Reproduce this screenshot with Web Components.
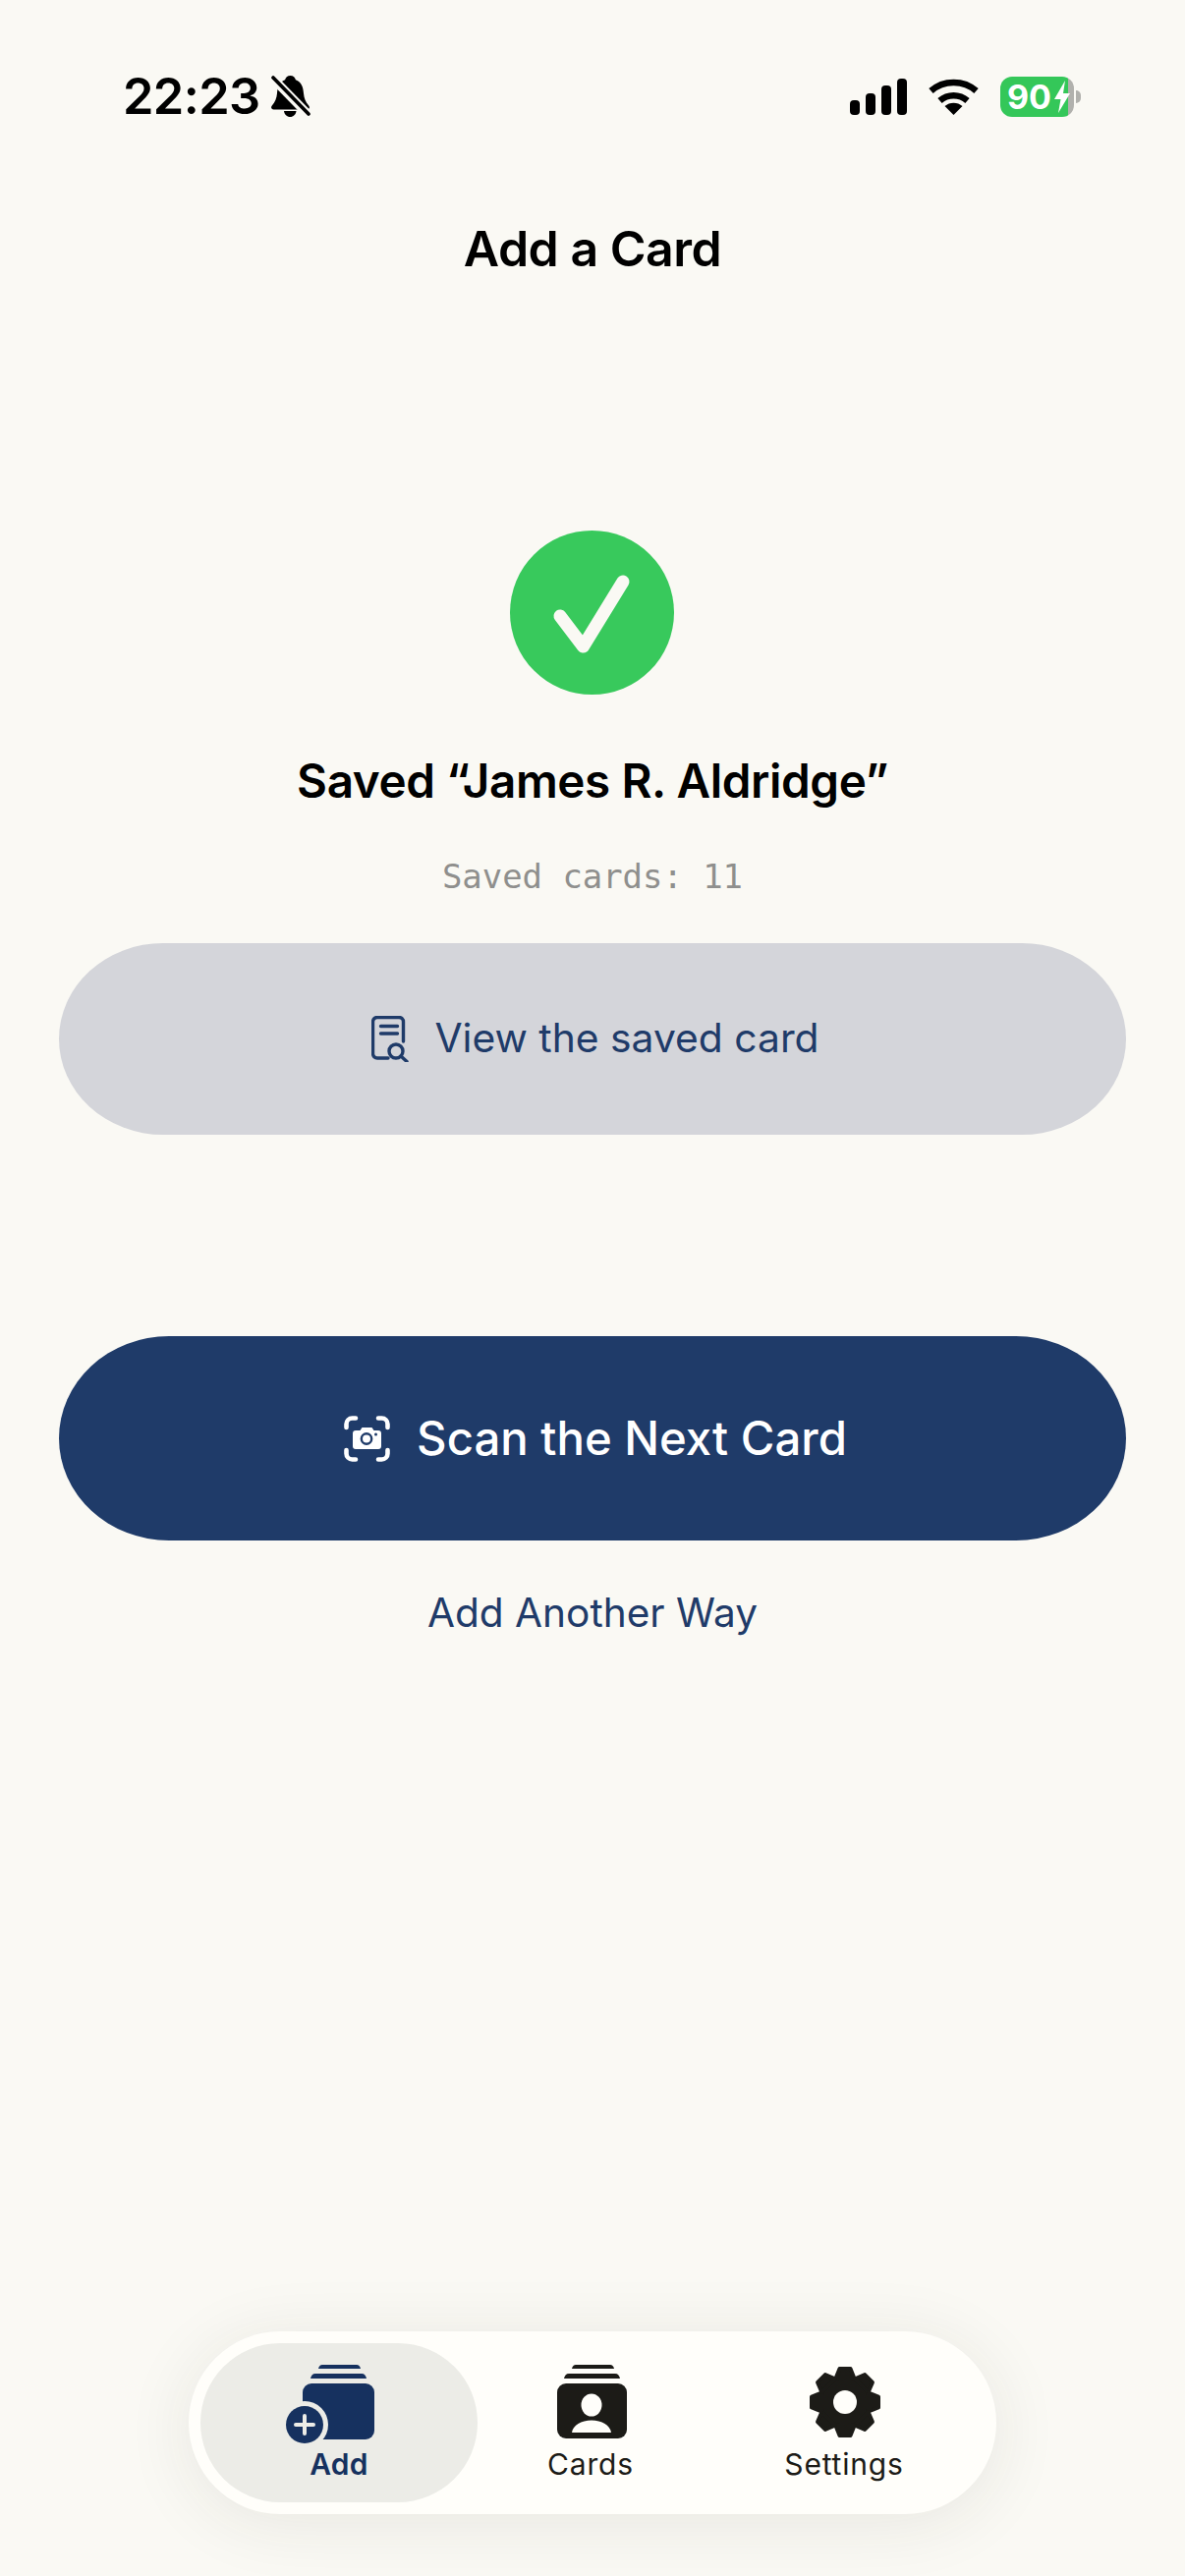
<!DOCTYPE html>
<html lang="en">
<head>
<meta charset="utf-8">
<title>Add a Card</title>
<style>
    html, body { margin: 0; padding: 0; background: #faf9f4; }
    body { font-family: Inter, "Liberation Sans", sans-serif; }
</style>
</head>
<body>
<app-screen>
    <status-bar></status-bar>
    <screen-title>Add a Card</screen-title>
    <save-result name="Saved “James R. Aldridge”" count="Saved cards: 11"></save-result>
    <action-button kind="secondary" icon="doc">View the saved card</action-button>
    <action-button kind="primary" icon="scan">Scan the Next Card</action-button>
    <text-link>Add Another Way</text-link>
    <tab-bar>
        <tab-item icon="add" active style="--tab-width: 282px">Add</tab-item>
        <tab-item icon="cards" style="--tab-width: 230px">Cards</tab-item>
        <tab-item icon="gear" style="--tab-width: 286px">Settings</tab-item>
    </tab-bar>
</app-screen>

<script>
class AppScreen extends HTMLElement {
    constructor() {
        super();
        this.attachShadow({ mode: 'open' });
        this.shadowRoot.innerHTML = `
            <style>
                :host {
                    display: flex;
                    flex-direction: column;
                    box-sizing: border-box;
                    width: 1206px;
                    height: 2622px;
                    overflow: hidden;
                    background: #faf9f4;
                }
            </style>
            <slot></slot>
        `;
    }
}

class StatusBar extends HTMLElement {
    constructor() {
        super();
        this.attachShadow({ mode: 'open' });
        this.shadowRoot.innerHTML = `
            <style>
                :host {
                    display: flex;
                    align-items: center;
                    justify-content: space-between;
                    box-sizing: border-box;
                    height: 60px;
                    margin-top: 68px;
                    padding: 0 106px 0 125px;
                    color: #000;
                }
                .left, .right { display: flex; align-items: center; }
                .time {
                    font: 600 50.500px/60px Inter, sans-serif;
                    letter-spacing: -0.6px;
                }
                .bell { margin-left: 11px; }
                .wifi { margin-left: 22px; }
                .battery {
                    position: relative;
                    display: flex;
                    align-items: center;
                    box-sizing: border-box;
                    width: 75px;
                    height: 41px;
                    margin-left: 22px;
                    margin-right: 7px;
                    padding-left: 7px;
                    border-radius: 12px;
                    background: linear-gradient(90deg, #34c759 69px, #b1b1ad 69px);
                    color: #fff;
                    font: 700 34px/41px Inter, sans-serif;
                    letter-spacing: 0;
                }
                .battery svg { margin-left: 3px; }
                .battery::after {
                    content: '';
                    position: absolute;
                    right: -7px;
                    top: 14px;
                    width: 5px;
                    height: 13px;
                    border-radius: 0 6px 6px 0;
                    background: #b1b1ad;
                }
            </style>
            <div class="left">
                <span class="time">22:23</span>
                <svg class="bell" width="40" height="44" viewBox="0 0 40 44">
                    <path fill="#000" d="M19.500 1c3 0 5 2 5.400 4.300C31 7.500 32.500 13 33 19c.4 5 2 9 5.200 12.500 1.500 1.800.6 3.900-1.800 3.900H2.600C.2 35.400-.7 33.300.8 31.500 4 28 5.600 24 6 19c.5-6 2-11.500 8.100-13.700C14.500 3 16.500 1 19.500 1z"/>
                    <path fill="#000" d="M13 37h12.500c-.4 3.500-3 6-6.250 6S13.400 40.500 13 37z"/>
                    <path stroke="#faf9f4" stroke-width="9" d="M-2 0L40 43"/>
                    <path stroke="#000" stroke-width="3.600" stroke-linecap="round" d="M2 3L38 40"/>
                </svg>
            </div>
            <div class="right">
                <svg width="58" height="37" viewBox="0 0 58 37">
                    <rect x="0" y="22" width="10" height="15" rx="4"/>
                    <rect x="16" y="15" width="10" height="22" rx="4"/>
                    <rect x="32" y="7" width="10" height="30" rx="4"/>
                    <rect x="48" y="0" width="10" height="37" rx="4"/>
                </svg>
                <svg class="wifi" width="51" height="37" viewBox="0 0 51 37">
                    <path fill="none" stroke="#000" stroke-width="6.500" stroke-linecap="butt" d="M2.500 12.500C15 1 36 1 48.500 12.500"/>
                    <path fill="none" stroke="#000" stroke-width="6.500" stroke-linecap="butt" d="M11.500 22.500C19.500 15.500 31.500 15.500 39.500 22.500"/>
                    <path fill="#000" d="M25.500 37L16.500 28C21.500 23.500 29.500 23.500 34.500 28z"/>
                </svg>
                <div class="battery">
                    <span>90</span>
                    <svg width="16" height="33" viewBox="0 0 16 33">
                        <path fill="#fff" d="M11 0L0 19h6.500L4 33 16 13H9z"/>
                    </svg>
                </div>
            </div>
        `;
    }
}

class ScreenTitle extends HTMLElement {
    constructor() {
        super();
        this.attachShadow({ mode: 'open' });
        this.shadowRoot.innerHTML = `
            <style>
                :host {
                    display: block;
                    margin-top: 95px;
                    color: #000;
                    font: 600 50px/60px Inter, sans-serif;
                    letter-spacing: -0.5px;
                    text-align: center;
                }
            </style>
            <slot></slot>
        `;
    }
}

class SaveResult extends HTMLElement {
    constructor() {
        super();
        this.attachShadow({ mode: 'open' });
    }

    connectedCallback() {
        this.shadowRoot.innerHTML = `
            <style>
                :host {
                    display: flex;
                    flex-direction: column;
                    align-items: center;
                    margin-top: 257px;
                }
                svg { margin-left: -2px; }
                .nombre {
                    margin-top: 58px;
                    color: #000;
                    font: 600 47.600px/60px Inter, sans-serif;
                    letter-spacing: -0.4px;
                }
                .total {
                    margin-top: 48px;
                    color: #8f8f8d;
                    font: 400 33.900px/40px "DejaVu Sans Mono", monospace;
                }
            </style>
            <svg width="167" height="167" viewBox="0 0 167 167">
                <circle cx="83.500" cy="83.500" r="83.500" fill="#38c95c"/>
                <path fill="none" stroke="#faf9f4" stroke-width="13" stroke-linecap="round" stroke-linejoin="round" d="M51 87L74.500 118L115 52"/>
            </svg>
            <div class="nombre">${this.getAttribute('name')}</div>
            <div class="total">${this.getAttribute('count')}</div>
        `;
    }
}

const ICONOS_BOTON = {
    doc: `
        <svg width="38" height="47" viewBox="0 0 38 47" fill="none" stroke="currentColor" stroke-width="3.400" stroke-linecap="round" stroke-linejoin="round">
            <path d="M17 43H6a4.500 4.500 0 0 1-4.500-4.500V6A4.500 4.500 0 0 1 6 1.500h22A4.500 4.500 0 0 1 32.500 6v20"/>
            <path d="M9.500 10.500h17M9.500 18h17"/>
            <circle cx="25" cy="36" r="7"/>
            <path d="M30 41l6 5.500"/>
        </svg>`,
    scan: `
        <svg width="47" height="47" viewBox="0 0 47 47">
            <g fill="none" stroke="currentColor" stroke-width="4.600" stroke-linecap="round">
                <path d="M2.500 12V8.500a6 6 0 0 1 6-6H12"/>
                <path d="M35 2.500h3.500a6 6 0 0 1 6 6V12"/>
                <path d="M44.500 35v3.500a6 6 0 0 1-6 6H35"/>
                <path d="M12 44.500H8.500a6 6 0 0 1-6-6V35"/>
            </g>
            <path fill="currentColor" d="M12 15h4.500l2-3h10l2 3H35a3 3 0 0 1 3 3v13a3 3 0 0 1-3 3H12a3 3 0 0 1-3-3V18a3 3 0 0 1 3-3z"/>
            <circle cx="23" cy="23.500" r="5.200" fill="none" stroke="#1f3b69" stroke-width="2.400"/>
            <circle cx="32.500" cy="19" r="1.500" fill="#1f3b69"/>
        </svg>`
};

class ActionButton extends HTMLElement {
    constructor() {
        super();
        this.attachShadow({ mode: 'open' });
    }

    connectedCallback() {
        this.shadowRoot.innerHTML = `
            <style>
                :host {
                    display: flex;
                    align-items: center;
                    justify-content: center;
                    box-sizing: border-box;
                    margin-left: 60px;
                    margin-right: 60px;
                    width: 1086px;
                }
                :host([kind="secondary"]) {
                    height: 195px;
                    margin-top: 47px;
                    gap: 26px;
                    padding-left: 6px;
                    border-radius: 106px / 97.5px;
                    background: #d4d5da;
                    color: #1f3b69;
                    font: 400 40.800px/60px Inter, sans-serif;
                }
                :host([kind="secondary"]) span { margin-bottom: 3px; }
                :host([kind="primary"]) {
                    height: 208px;
                    margin-top: 205px;
                    gap: 27px;
                    padding-left: 6px;
                    border-radius: 112px / 104px;
                    background: #1f3b69;
                    color: #fff;
                    font: 550 47.300px/60px Inter, sans-serif;
                }
                svg { display: block; }
            </style>
            ${ICONOS_BOTON[this.getAttribute('icon')]}
            <span><slot></slot></span>
        `;
    }
}

class TextLink extends HTMLElement {
    constructor() {
        super();
        this.attachShadow({ mode: 'open' });
        this.shadowRoot.innerHTML = `
            <style>
                :host {
                    display: block;
                    margin-top: 49px;
                    color: #1f3b69;
                    font: 400 40.600px/50px Inter, sans-serif;
                    text-align: center;
                }
            </style>
            <slot></slot>
        `;
    }
}

class TabBar extends HTMLElement {
    constructor() {
        super();
        this.attachShadow({ mode: 'open' });
        this.shadowRoot.innerHTML = `
            <style>
                :host {
                    display: flex;
                    align-self: flex-start;
                    box-sizing: border-box;
                    width: 822px;
                    height: 186px;
                    margin: auto 0 63px 192px;
                    padding: 12px;
                    border-radius: 93px;
                    background: #fffefa;
                    box-shadow: 0 8px 70px rgba(40, 40, 30, 0.09);
                }
            </style>
            <slot></slot>
        `;
    }
}

const PILAS = (color, sobre) => `
    <path fill="${color}" d="M${sobre + 8} 11c.6-2.500 2-4 4-4h35c2 0 3.400 1.500 4 4z"/>
    <path fill="${color}" d="M${sobre} 21c.6-3 2-5 5-5h47c3 0 4.400 2 5 5z"/>
`;

const ICONOS_TAB = {
    add: `
        <svg width="100" height="90" viewBox="0 0 100 90">
            ${PILAS('#16315f', 21)}
            <rect x="13" y="26" width="73" height="57" rx="9" fill="#16315f"/>
            <circle cx="15" cy="68" r="24" fill="#ecece7"/>
            <circle cx="15" cy="68" r="19" fill="#16315f"/>
            <path stroke="#ecece7" stroke-width="4" stroke-linecap="round" d="M15 59v18M6 68h18"/>
        </svg>`,
    cards: `
        <svg width="100" height="90" viewBox="0 0 100 90">
            ${PILAS('#1c1b17', 23)}
            <rect x="16" y="26" width="71" height="56" rx="9" fill="#1c1b17"/>
            <ellipse cx="51" cy="48" rx="10.500" ry="11.500" fill="#fffefa"/>
            <path fill="#fffefa" d="M31 76c1-7.500 9.500-12.500 20-12.500S70 68.500 71 76z"/>
        </svg>`,
    gear: `
        <svg width="100" height="90" viewBox="0 0 100 90">
            <g fill="#1c1b17" stroke="#1c1b17" stroke-width="4" stroke-linejoin="round" transform="translate(51 45)">
                <circle r="25"/>
                ${[0, 45, 90, 135, 180, 225, 270, 315].map(a => `<path transform="rotate(${a})" d="M-9.500 -24L-5.500 -34H5.500L9.500 -24z"/>`).join('')}
            </g>
            <circle cx="51" cy="45" r="12" fill="#fffefa"/>
        </svg>`
};

class TabItem extends HTMLElement {
    constructor() {
        super();
        this.attachShadow({ mode: 'open' });
    }

    connectedCallback() {
        this.shadowRoot.innerHTML = `
            <style>
                :host {
                    display: flex;
                    flex-direction: column;
                    align-items: center;
                    box-sizing: border-box;
                    width: var(--tab-width);
                    height: 162px;
                    padding-top: 15px;
                    border-radius: 81px;
                    color: #1c1b17;
                    font: 400 30px/36px Inter, sans-serif;
                    letter-spacing: 0.8px;
                }
                :host([active]) {
                    background: #ecece7;
                    color: #16315f;
                    font-weight: 600;
                    letter-spacing: 0.3px;
                }
                svg { display: block; flex: none; overflow: visible; }
            </style>
            ${ICONOS_TAB[this.getAttribute('icon')]}
            <span><slot></slot></span>
        `;
    }
}

customElements.define('app-screen', AppScreen);
customElements.define('status-bar', StatusBar);
customElements.define('screen-title', ScreenTitle);
customElements.define('save-result', SaveResult);
customElements.define('action-button', ActionButton);
customElements.define('text-link', TextLink);
customElements.define('tab-bar', TabBar);
customElements.define('tab-item', TabItem);
</script>
</body>
</html>
